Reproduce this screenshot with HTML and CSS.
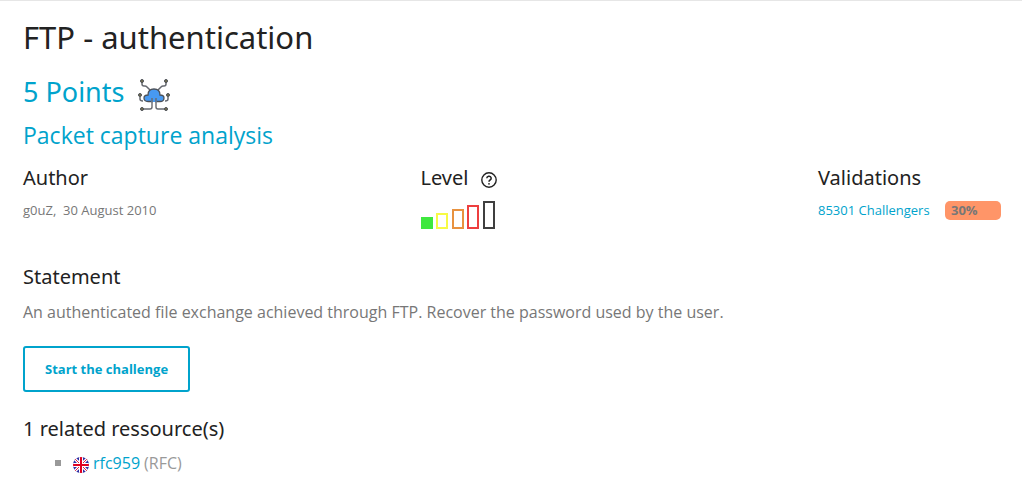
FILE: index.html
```html
<!DOCTYPE html>
<html lang="en">
<head>
<meta charset="utf-8">
<meta name="viewport" content="width=device-width, initial-scale=1">
<title>FTP - authentication</title>
<link rel="stylesheet" href="styles.css">
</head>
<body>
<main class="challenge">
  <h1 class="title">FTP - authentication</h1>
  <h2 class="points"><span>5 Points</span>
    <svg class="cloud" viewBox="0 0 32 32" aria-hidden="true">
      <g fill="none" stroke="#666970" stroke-width="1.5">
        <path d="M4 3v2q0 2 2 2h1q1 0 2 1l3 3M28 3v2q0 2-2 2h-1q-1 0-2 1l-3 3M2 18v2q0 2 3 2M30 18v2q0 2-3 2"/>
      </g>
      <path d="M10 22.500q-4 0-4-3.500 0-3 4-3 0-6 6-6t6 6q4 0 4 3 0 3.500-4 3.500z" fill="#4799f1" stroke="#4b5058" stroke-width="1.300"/>
      <path d="M13 18h6v5h-6z" fill="#4799f1"/>
      <path d="M15 23h2v8h-2z" fill="#fff"/>
      <path d="M14 19v9q0 2-2 2H4M18 19v9q0 2 2 2h8" fill="none" stroke="#666970" stroke-width="1.400"/>
      <g fill="#77724f" stroke="#4b4e55" stroke-width="1"><circle cx="4" cy="2" r="1.500"/><circle cx="28" cy="2" r="1.500"/><circle cx="2" cy="16" r="1.500"/><circle cx="30" cy="16" r="1.500"/><circle cx="4" cy="30" r="1.500"/><circle cx="28" cy="30" r="1.500"/></g>
    </svg>
  </h2>
  <h3 class="subtitle">Packet capture analysis</h3>
  <div class="facts">
    <section>
      <h4 class="heading">Author</h4>
      <p class="small">g0uZ,&nbsp; 30 August 2010</p>
    </section>
    <section>
      <h4 class="heading level-heading">Level
        <svg class="help" viewBox="0 0 16 16" role="img" aria-label="Help"><circle cx="8" cy="8" r="7.2" fill="none" stroke="#222" stroke-width="1.4"/><path d="M5.8 6.3a2.2 2 0 1 1 3.3 1.7Q8 8.6 8 9.8" fill="none" stroke="#222" stroke-width="1.5"/><circle cx="8" cy="11.8" r=".9" fill="#222"/></svg>
      </h4>
      <div class="bars" role="img" aria-label="Level 1 of 5">
        <span class="bar bar-1"></span><span class="bar bar-2"></span><span class="bar bar-3"></span><span class="bar bar-4"></span><span class="bar bar-5"></span>
      </div>
    </section>
    <section>
      <h4 class="heading">Validations</h4>
      <p class="small validations"><a href="#challengers">85301 Challengers</a><span class="rate">30%</span></p>
    </section>
  </div>
  <h4 class="heading">Statement</h4>
  <p class="statement">An authenticated file exchange achieved through FTP. Recover the password used by the user.</p>
  <button class="start" type="button">Start the challenge</button>
  <h4 class="heading">1 related ressource(s)</h4>
  <ul class="resources">
    <li>
      <svg class="flag" viewBox="0 0 16 16" role="img" aria-label="English"><clipPath id="disc"><circle cx="8" cy="8" r="8"/></clipPath><g clip-path="url(#disc)"><path fill="#3030a4" d="M0 0h16v16H0z"/><path d="M0 0l16 16M16 0L0 16" stroke="#fff" stroke-width="3"/><path d="M0 0l16 16M16 0L0 16" stroke="#e0203c" stroke-width="1"/><path d="M8 0v16M0 8h16" stroke="#fff" stroke-width="4"/><path d="M8 0v16M0 8h16" stroke="#e00020" stroke-width="2"/></g></svg>
      <a href="#rfc959">rfc959</a> <span class="kind">(RFC)</span>
    </li>
  </ul>
</main>
</body>
</html>
```
FILE: styles.css
```css
* { box-sizing: border-box; }
body {
  margin: 0;
  border-top: 1px solid #e6e6e6;
  background: #fff;
  color: #777;
  font-family: "Open Sans", sans-serif;
  font-size: 16px;
  line-height: 24px;
}
h1, h2, h3, h4, p, ul { margin: 0; font-weight: 400; }
a { color: #00a3cc; text-decoration: none; }
.challenge { padding: 12px 21px 0 23px; }
.title { color: #222; font-family: "Noto Sans", sans-serif; font-size: 31px; line-height: 48px; }
.points {
  display: flex;
  align-items: center;
  gap: 14px;
  margin-top: 11px;
  color: #00a3cc;
  font-family: "Noto Sans", sans-serif;
  font-size: 27px;
  line-height: 40px;
}
.cloud { width: 32px; height: 32px; margin-top: 6px; }
.subtitle { margin-top: 7px; color: #00a3cc; font-family: "Open Sans", sans-serif; font-size: 23px; line-height: 32px; }
.facts {
  display: grid;
  grid-template-columns: 1fr 1fr 183px;
  margin: 13px 0 34px;
}
.heading { color: #222; font-family: "Noto Sans", sans-serif; font-size: 20px; line-height: 28px; }
.level-heading { display: flex; align-items: center; gap: 13px; }
.help { width: 16px; height: 16px; margin-top: 4px; }
.small { margin-top: 8px; font-size: 13px; line-height: 20px; }
.bars { display: flex; align-items: flex-end; justify-content: space-between; width: 74px; height: 28px; margin-top: 9px; }
.bar { width: 12px; border: 2px solid; }
.bar-1 { height: 12px; color: #3fe83f; background: #3fe83f; }
.bar-2 { height: 16px; color: #f7fa45; }
.bar-3 { height: 20px; color: #e8923f; }
.bar-4 { height: 24px; color: #ee3f3f; }
.bar-5 { height: 28px; color: #3f3f3f; }
.validations { display: flex; align-items: center; justify-content: space-between; }
.rate { width: 56px; padding-left: 6px; border-radius: 5px; background: #ff9568; font-weight: 700; line-height: 19px; }
.statement { margin-top: 9px; }
.start {
  display: block;
  margin: 22px 0 23px;
  padding: 10px 20px;
  border: 2px solid #00a3cc;
  border-radius: 3px;
  background: #fff;
  color: #00a3cc;
  font: 700 13px/22px "Open Sans", sans-serif;
}
.resources { margin-top: 8px; padding: 0; list-style: none; }
.resources li { display: flex; align-items: center; gap: 4px; padding-left: 32px; }
.resources li::before { content: ""; width: 6px; height: 6px; margin-right: 8px; background: #999; }
.flag { width: 16px; height: 16px; margin-top: 4px; }
.kind { color: #999; }
```
